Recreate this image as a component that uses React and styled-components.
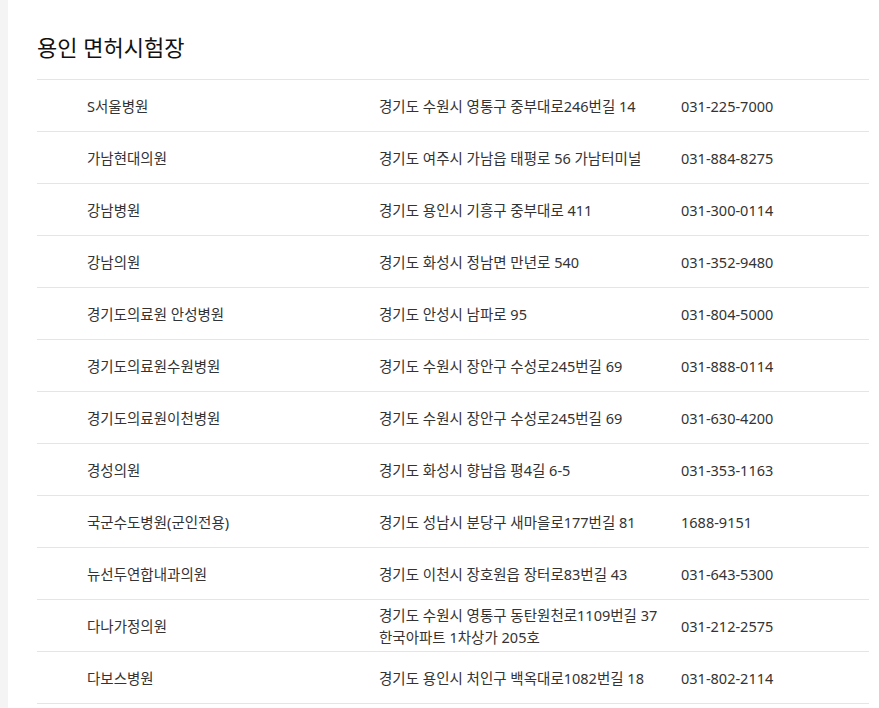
import React from "react";
import styled, { createGlobalStyle } from "styled-components";

const GlobalStyle = createGlobalStyle`
  body {
    margin: 0;
    background: #f4f4f4;
    font-family: "Noto Sans", "Noto Sans CJK KR", sans-serif;
  }
`;

const hospitals = [
  { name: "S서울병원", address: ["경기도 수원시 영통구 중부대로246번길 14"], phone: "031-225-7000" },
  { name: "가남현대의원", address: ["경기도 여주시 가남읍 태평로 56 가남터미널"], phone: "031-884-8275" },
  { name: "강남병원", address: ["경기도 용인시 기흥구 중부대로 411"], phone: "031-300-0114" },
  { name: "강남의원", address: ["경기도 화성시 정남면 만년로 540"], phone: "031-352-9480" },
  { name: "경기도의료원 안성병원", address: ["경기도 안성시 남파로 95"], phone: "031-804-5000" },
  { name: "경기도의료원수원병원", address: ["경기도 수원시 장안구 수성로245번길 69"], phone: "031-888-0114" },
  { name: "경기도의료원이천병원", address: ["경기도 수원시 장안구 수성로245번길 69"], phone: "031-630-4200" },
  { name: "경성의원", address: ["경기도 화성시 향남읍 평4길 6-5"], phone: "031-353-1163" },
  { name: "국군수도병원(군인전용)", address: ["경기도 성남시 분당구 새마을로177번길 81"], phone: "1688-9151" },
  { name: "뉴선두연합내과의원", address: ["경기도 이천시 장호원읍 장터로83번길 43"], phone: "031-643-5300" },
  {
    name: "다나가정의원",
    address: ["경기도 수원시 영통구 동탄원천로1109번길 37", "한국아파트 1차상가 205호"],
    phone: "031-212-2575",
  },
  { name: "다보스병원", address: ["경기도 용인시 처인구 백옥대로1082번길 18"], phone: "031-802-2114" },
];

function App() {
  return (
    <>
      <GlobalStyle />
      <Panel>
        <Title>용인 면허시험장</Title>
        <List>
          {hospitals.map((h) => (
            <Row key={h.name}>
              <Name>{h.name}</Name>
              <Address>
                {h.address.map((line) => (
                  <div key={line}>{line}</div>
                ))}
              </Address>
              <Phone>{h.phone}</Phone>
            </Row>
          ))}
        </List>
      </Panel>
    </>
  );
}

export default App;

const Panel = styled.div`
  margin-left: 8px;
  min-height: 100vh;
  background: #fff;
  padding: 33px 10px 0 29px;
  box-sizing: border-box;
`;

const Title = styled.h2`
  margin: 0 0 18px;
  font-size: 22px;
  line-height: 28px;
  font-weight: 400;
  color: #111;
`;

const List = styled.div`
  border-top: 1px solid #e5e5e5;
`;

const Row = styled.div`
  display: grid;
  grid-template-columns: 50px 292px 302px 1fr;
  align-items: center;
  height: 51px;
  border-bottom: 1px solid #e5e5e5;
  font-size: 14.5px;
  line-height: 22px;
  color: #333;
`;

const Name = styled.div`
  grid-column: 2;
`;

const Address = styled.div`
  grid-column: 3;
`;

const Phone = styled.div`
  grid-column: 4;
`;
